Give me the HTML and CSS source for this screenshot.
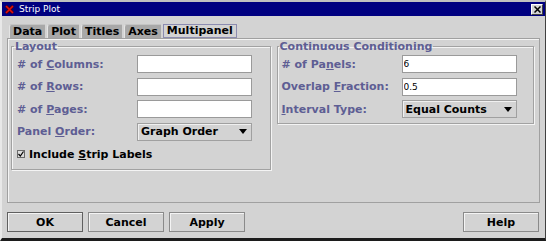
FILE: index.html
```html
<!DOCTYPE html>
<html lang="en">
<head>
    <meta charset="UTF-8">
    <title>Strip Plot</title>
    <link rel="stylesheet" href="styles.css">
</head>
<body>
    <div class="window">
        <div class="titlebar">
            <svg class="app-icon" width="9" height="9" viewBox="0 0 9 9">
                <path d="M1 1 L8 8 M8 1 L1 8" stroke="#5a0000" stroke-width="3"/>
                <path d="M1 1 L8 8 M8 1 L1 8" stroke="#e01010" stroke-width="1.6"/>
            </svg>
            <span class="title">Strip Plot</span>
            <span class="close-btn">
                <svg width="7" height="7" viewBox="0 0 7 7">
                    <path d="M0.5 0.5 L6.5 6.5 M6.5 0.5 L0.5 6.5" stroke="#000" stroke-width="1.5"/>
                </svg>
            </span>
        </div>

        <div class="tabs">
            <span class="tab">Data</span>
            <span class="tab">Plot</span>
            <span class="tab">Titles</span>
            <span class="tab">Axes</span>
            <span class="tab active">Multipanel</span>
        </div>

        <div class="tab-panel">
            <fieldset class="group">
                <legend>Layout</legend>
                <div class="form-grid">
                    <label># of <u>C</u>olumns:</label>
                    <input type="text">
                    <label># of <u>R</u>ows:</label>
                    <input type="text">
                    <label># of <u>P</u>ages:</label>
                    <input type="text">
                    <label>Panel <u>O</u>rder:</label>
                    <div class="dropdown">
                        <span>Graph Order</span>
                        <svg width="8" height="5" viewBox="0 0 8 5"><path d="M0 0 H8 L4 5 Z" fill="#000"/></svg>
                    </div>
                </div>
                <div class="check-row">
                    <span class="checkbox">
                        <svg width="6" height="6" viewBox="0 0 6 6"><path d="M0.5 3 L2.3 5 L5.5 0.5" stroke="#000" stroke-width="1.2" fill="none"/></svg>
                    </span>
                    <span>Include <u>S</u>trip Labels</span>
                </div>
            </fieldset>

            <fieldset class="group group-short">
                <legend>Continuous Conditioning</legend>
                <div class="form-grid">
                    <label># of Pa<u>n</u>els:</label>
                    <input type="text" value="6">
                    <label>Overlap <u>F</u>raction:</label>
                    <input type="text" value="0.5">
                    <label><u>I</u>nterval Type:</label>
                    <div class="dropdown">
                        <span>Equal Counts</span>
                        <svg width="8" height="5" viewBox="0 0 8 5"><path d="M0 0 H8 L4 5 Z" fill="#000"/></svg>
                    </div>
                </div>
            </fieldset>
        </div>

        <div class="button-bar">
            <button class="btn btn-default">OK</button>
            <button class="btn">Cancel</button>
            <button class="btn">Apply</button>
            <button class="btn btn-help">Help</button>
        </div>
    </div>
</body>
</html>
```

FILE: styles.css
```css
* {
    margin: 0;
    padding: 0;
    box-sizing: border-box;
}

body {
    background: #d3d3d3;
    font-family: 'DejaVu Sans', sans-serif;
    font-size: 11px;
}

.window {
    width: 546px;
    height: 241px;
    background: #d3d3d3;
    border-style: solid;
    border-width: 2px 1px 3px 2px;
    border-color: #c0c0c0 #404040 #1c1c1c #e8e8e8;
}

.titlebar {
    height: 14px;
    background: #000080;
    display: flex;
    align-items: center;
    padding: 0 2px 0 3px;
}

.app-icon {
    margin-right: 5px;
}

.title {
    color: #fff;
    font-size: 9px;
    flex: 1;
}

.close-btn {
    width: 12px;
    height: 11px;
    background: #d3d3d3;
    display: flex;
    align-items: center;
    justify-content: center;
    border: 1px solid;
    border-color: #fff #404040 #404040 #fff;
}

.tabs {
    display: flex;
    gap: 2px;
    margin: 8px 0 0 7px;
    height: 14px;
}

.tab {
    font-size: 11px;
    font-weight: bold;
    line-height: 13px;
    padding: 0 3px;
    background: #a8a8a8;
    border-top: 1px solid #c4c4c4;
    border-left: 1px solid #e4e4e4;
    border-top-left-radius: 3px;
    color: #000;
}

.tab.active {
    background: #d3d3d3;
    border: 1px solid #8c8cb0;
    border-radius: 0;
    line-height: 12px;
}

.tab-panel {
    margin-left: 5px;
    width: 533px;
    height: 165px;
    border: 1px solid #a0a0a0;
    box-shadow: inset 1px 1px 0 #f4f4f4;
    display: flex;
    align-items: flex-start;
    gap: 6px;
    padding: 1px 5px 0 3px;
}

.group {
    flex: 1;
    border: 1px solid #a2a2a2;
    box-shadow: inset 1px 1px 0 #f4f4f4, 1px 1px 0 #f4f4f4;
    padding: 0 5px 8px;
}

.group-short {
    padding: 0 4px 5px;
}

.group legend {
    font-weight: bold;
    color: #5e5e94;
    line-height: 13px;
    padding: 0 1px;
    margin-left: -3px;
}

.form-grid {
    display: grid;
    grid-template-columns: 120px 115px;
    grid-auto-rows: 18px;
    row-gap: 4.5px;
    margin-top: 2px;
}

.form-grid label {
    font-weight: bold;
    color: #5e5e94;
    align-self: center;
}

.form-grid input {
    height: 18px;
    border: 1px solid #9a9a9a;
    background: #fff;
    font-family: 'DejaVu Sans', sans-serif;
    font-size: 9px;
    padding: 0 1px;
    outline: none;
}

.dropdown {
    height: 18px;
    border: 1px solid #a0a0a0;
    box-shadow: inset 1px 1px 0 #f0f0f0;
    display: flex;
    align-items: center;
    justify-content: space-between;
    padding: 0 4px 0 3px;
    font-weight: bold;
    color: #000;
}

.check-row {
    display: flex;
    align-items: center;
    gap: 4px;
    margin-top: 7px;
    height: 13px;
    font-weight: bold;
    color: #000;
}

.checkbox {
    width: 8px;
    height: 8px;
    border: 1px solid #6a6a6a;
    background: #dcdcdc;
    display: flex;
    align-items: center;
    justify-content: center;
}

.button-bar {
    display: flex;
    gap: 5px;
    margin: 9px 6px 0 5px;
}

.btn {
    width: 76px;
    height: 20px;
    background: #d3d3d3;
    border: 1px solid #8a8a8a;
    box-shadow: inset 1px 1px 0 #f4f4f4;
    font-family: 'DejaVu Sans', sans-serif;
    font-size: 11px;
    font-weight: bold;
    color: #000;
}

.btn-default {
    border-color: #606060;
}

.btn-help {
    margin-left: auto;
}
```
